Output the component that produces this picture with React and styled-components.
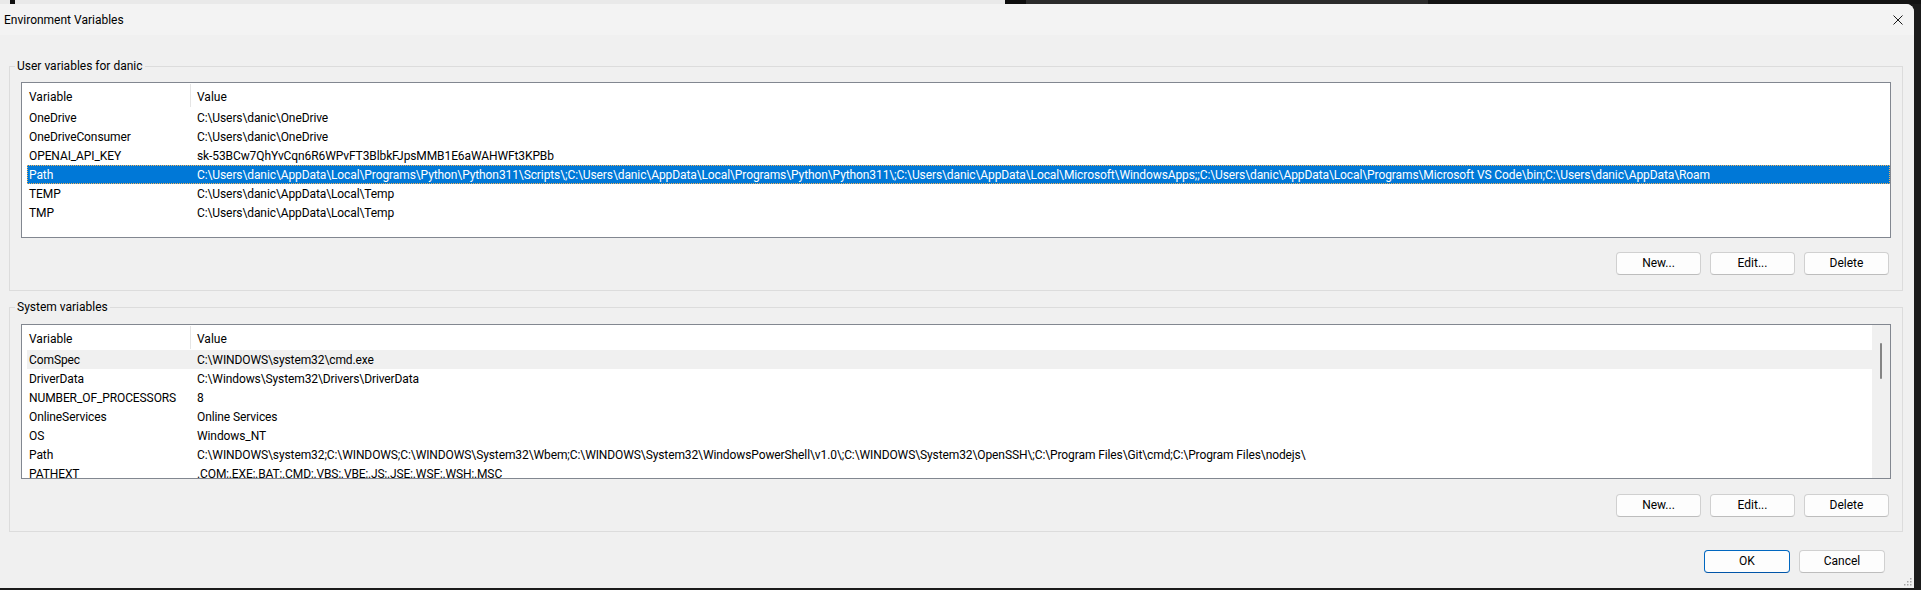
import React from "react";
import styled, { createGlobalStyle } from "styled-components";

const GlobalStyle = createGlobalStyle`
  html, body {
    margin: 0;
    padding: 0;
    background: #1b1b1b;
  }
  body {
    font-family: Roboto, "Liberation Sans", Arial, sans-serif;
    -webkit-font-smoothing: antialiased;
  }
`;

const Screen = styled.div`
  width: 1921px;
  height: 590px;
  display: flex;
  flex-direction: column;
  background: #1b1b1b;
  overflow: hidden;
`;

const BackStrip = styled.div`
  height: 4px;
  flex-shrink: 0;
  display: flex;
`;

const StripPart = styled.div`
  flex: ${({ $w }) => ($w ? `0 0 ${$w}px` : "1")};
  background: ${({ $bg }) => $bg};
`;

const Dialog = styled.div`
  position: relative;
  width: 1914px;
  height: 584px;
  flex-shrink: 0;
  display: flex;
  flex-direction: column;
  background: #f0f0f0;
  border-top-right-radius: 8px;
  overflow: hidden;
  color: #000;
  font-size: 12px;
`;

const TitleBar = styled.div`
  height: 31px;
  flex-shrink: 0;
  display: flex;
  align-items: center;
  justify-content: space-between;
  padding: 0 10px 0 4px;
  background: #f3f3f3;
`;

const Title = styled.span`
  font-size: 12px;
  line-height: 16px;
`;

const CloseButton = styled.button`
  width: 12px;
  height: 12px;
  padding: 0;
  border: none;
  background: transparent;
  display: flex;
  align-items: center;
  justify-content: center;
`;

const Body = styled.div`
  flex: 1;
  display: flex;
  flex-direction: column;
  padding: 0 11px 0 9px;
`;

const Group = styled.fieldset`
  margin: ${({ $top }) => $top}px 0 0;
  padding: ${({ $padTop }) => $padTop}px 11px ${({ $padBottom }) => $padBottom}px 11px;
  border: 1px solid #dcdcdc;
  min-width: 0;
  display: flex;
  flex-direction: column;
`;

const Legend = styled.legend`
  margin-left: -6px;
  padding: 0 2px;
  font-size: 12px;
  line-height: 16px;
`;

const ListBox = styled.div`
  height: ${({ $h }) => $h}px;
  box-sizing: border-box;
  border: 1px solid #828790;
  background: #fff;
  display: flex;
  overflow: hidden;
`;

const ListMain = styled.div`
  flex: 1;
  min-width: 0;
  display: flex;
  flex-direction: column;
`;

const HeaderRow = styled.div`
  height: 25px;
  flex-shrink: 0;
  display: grid;
  grid-template-columns: 168px 1fr;
`;

const HeaderCell = styled.div`
  height: 23px;
  margin: 1px 0;
  padding-left: ${({ $first }) => ($first ? "7px" : "6px")};
  border-left: ${({ $first }) => ($first ? "none" : "1px solid #e5e5e5")};
  line-height: 27px;
`;

const Rows = styled.div`
  padding-left: 5px;
  display: flex;
  flex-direction: column;
  letter-spacing: -0.1px;
`;

const Row = styled.div`
  height: 19px;
  flex-shrink: 0;
  display: grid;
  grid-template-columns: 163px 1fr;
  overflow: hidden;
  white-space: nowrap;
  background: ${({ $state }) =>
    $state === "selected" ? "#0078d7" : $state === "inactive" ? "#f0f0f0" : "transparent"};
  color: ${({ $state }) => ($state === "selected" ? "#fff" : "#000")};
  outline: ${({ $state }) => ($state === "selected" ? "1px dotted #f3b25a" : "none")};
  outline-offset: -1px;
`;

const Cell = styled.div`
  overflow: hidden;
  padding-top: 1px;
  line-height: 19px;
  padding-left: ${({ $first }) => ($first ? "2px" : "7px")};
`;

const ScrollTrack = styled.div`
  width: 18px;
  flex-shrink: 0;
  background: #f0f0f0;
  display: flex;
  justify-content: center;
  padding-top: 18px;
  box-sizing: border-box;
`;

const ScrollThumb = styled.div`
  width: 2px;
  height: 36px;
  border-radius: 1px;
  background: #858585;
`;

const ButtonRow = styled.div`
  display: flex;
  justify-content: flex-end;
  gap: ${({ $gap }) => $gap}px;
  margin-top: ${({ $top }) => $top}px;
  padding-right: ${({ $right }) => $right}px;
`;

const Button = styled.button`
  width: ${({ $w }) => $w}px;
  height: 23px;
  box-sizing: border-box;
  padding: 0;
  border: 1px solid ${({ $primary }) => ($primary ? "#0067c0" : "#d0d0d0")};
  border-bottom-color: ${({ $primary }) => ($primary ? "#0055a8" : "#bdbdbd")};
  border-radius: 4px;
  background: #fdfdfd;
  color: #000;
  font-family: Roboto, "Liberation Sans", Arial, sans-serif;
  font-size: 12px;
  line-height: 21px;
`;

const Grip = styled.svg`
  position: absolute;
  right: 2px;
  bottom: 2px;
`;

const userVars = [
  ["OneDrive", "C:\\Users\\danic\\OneDrive"],
  ["OneDriveConsumer", "C:\\Users\\danic\\OneDrive"],
  ["OPENAI_API_KEY", "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"],
  [
    "Path",
    "C:\\Users\\danic\\AppData\\Local\\Programs\\Python\\Python311\\Scripts\\;C:\\Users\\danic\\AppData\\Local\\Programs\\Python\\Python311\\;C:\\Users\\danic\\AppData\\Local\\Microsoft\\WindowsApps;;C:\\Users\\danic\\AppData\\Local\\Programs\\Microsoft VS Code\\bin;C:\\Users\\danic\\AppData\\Roam",
    "selected"
  ],
  ["TEMP", "C:\\Users\\danic\\AppData\\Local\\Temp"],
  ["TMP", "C:\\Users\\danic\\AppData\\Local\\Temp"]
];

const systemVars = [
  ["ComSpec", "C:\\WINDOWS\\system32\\cmd.exe", "inactive"],
  ["DriverData", "C:\\Windows\\System32\\Drivers\\DriverData"],
  ["NUMBER_OF_PROCESSORS", "8"],
  ["OnlineServices", "Online Services"],
  ["OS", "Windows_NT"],
  [
    "Path",
    "C:\\WINDOWS\\system32;C:\\WINDOWS;C:\\WINDOWS\\System32\\Wbem;C:\\WINDOWS\\System32\\WindowsPowerShell\\v1.0\\;C:\\WINDOWS\\System32\\OpenSSH\\;C:\\Program Files\\Git\\cmd;C:\\Program Files\\nodejs\\"
  ],
  ["PATHEXT", ".COM;.EXE;.BAT;.CMD;.VBS;.VBE;.JS;.JSE;.WSF;.WSH;.MSC"]
];

function VarList({ rows, height, scroll }) {
  return (
    <ListBox $h={height}>
      <ListMain>
        <HeaderRow>
          <HeaderCell $first>Variable</HeaderCell>
          <HeaderCell>Value</HeaderCell>
        </HeaderRow>
        <Rows>
          {rows.map(([name, value, state]) => (
            <Row key={name} $state={state}>
              <Cell $first>{name}</Cell>
              <Cell>{value}</Cell>
            </Row>
          ))}
        </Rows>
      </ListMain>
      {scroll ? (
        <ScrollTrack>
          <ScrollThumb />
        </ScrollTrack>
      ) : null}
    </ListBox>
  );
}

function ListButtons({ top }) {
  return (
    <ButtonRow $gap={9} $top={top} $right={2}>
      <Button $w={85}>New...</Button>
      <Button $w={85}>Edit...</Button>
      <Button $w={85}>Delete</Button>
    </ButtonRow>
  );
}

export default function App() {
  return (
    <Screen>
      <GlobalStyle />
      <BackStrip>
        <StripPart $w={10} $bg="#e9e9e9" />
        <StripPart $w={5} $bg="#111" />
        <StripPart $w={990} $bg="#e9e9e9" />
        <StripPart $w={21} $bg="#0d0d0d" />
        <StripPart $w={402} $bg="#2b2b2b" />
        <StripPart $bg="#131313" />
      </BackStrip>
      <Dialog>
        <TitleBar>
          <Title>Environment Variables</Title>
          <CloseButton aria-label="Close">
            <svg width="10" height="10" viewBox="0 0 10 10">
              <path d="M0.5 0.5 L9.5 9.5 M9.5 0.5 L0.5 9.5" stroke="#1a1a1a" strokeWidth="1" fill="none" />
            </svg>
          </CloseButton>
        </TitleBar>
        <Body>
          <Group $top={23} $padTop={8} $padBottom={15}>
            <Legend>User variables for danic</Legend>
            <VarList rows={userVars} height={156} />
            <ListButtons top={14} />
          </Group>
          <Group $top={8} $padTop={9} $padBottom={14}>
            <Legend>System variables</Legend>
            <VarList rows={systemVars} height={155} scroll />
            <ListButtons top={15} />
          </Group>
          <ButtonRow $gap={9} $top={18} $right={18}>
            <Button $w={86} $primary>OK</Button>
            <Button $w={86}>Cancel</Button>
          </ButtonRow>
        </Body>
        <Grip width="10" height="10" viewBox="0 0 10 10">
          <g fill="#a6a6a6">
            <rect x="8" y="2" width="1.5" height="1.5" />
            <rect x="5" y="5" width="1.5" height="1.5" />
            <rect x="8" y="5" width="1.5" height="1.5" />
            <rect x="2" y="8" width="1.5" height="1.5" />
            <rect x="5" y="8" width="1.5" height="1.5" />
            <rect x="8" y="8" width="1.5" height="1.5" />
          </g>
        </Grip>
      </Dialog>
    </Screen>
  );
}
